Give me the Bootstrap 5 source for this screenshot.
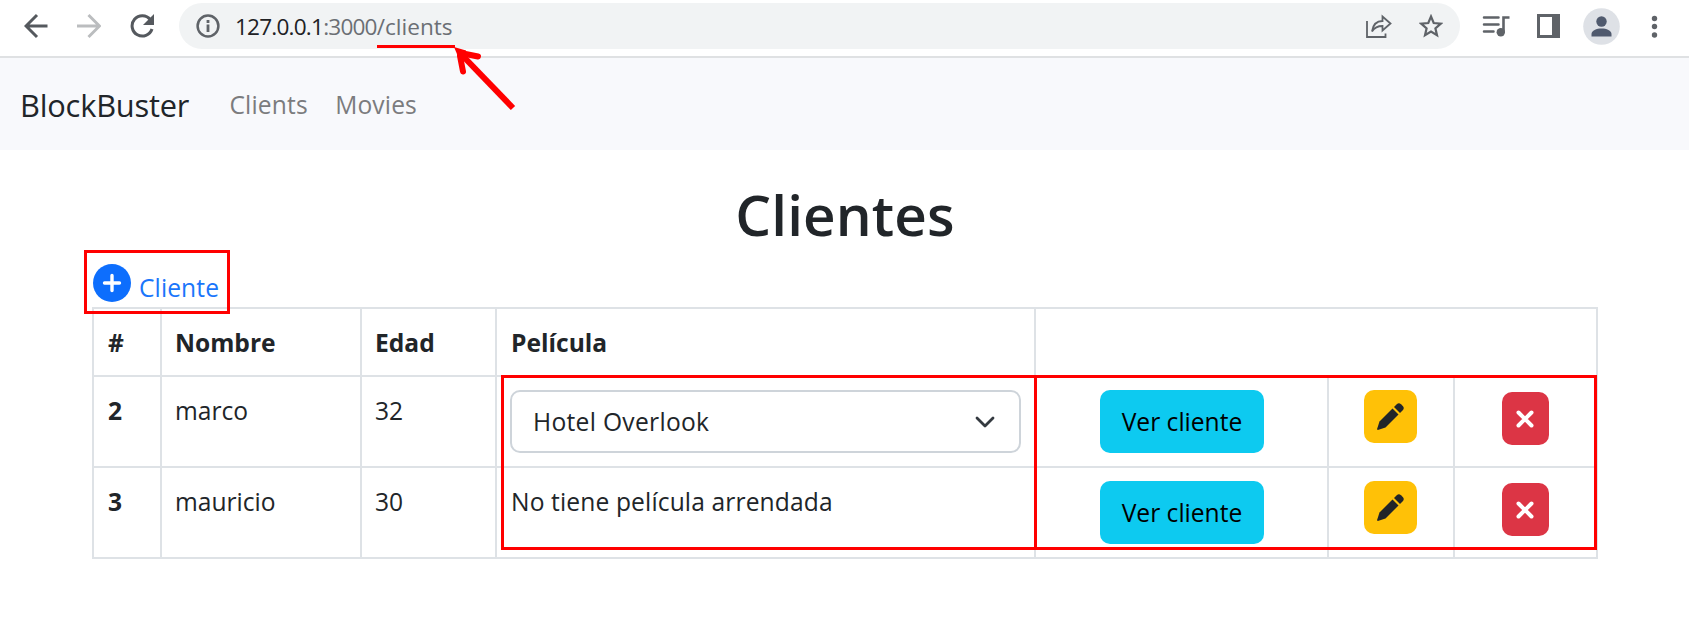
<!DOCTYPE html>
<html lang="es">
<head>
<meta charset="utf-8">
<meta name="viewport" content="width=device-width, initial-scale=1">
<title>Clientes</title>
<link href="https://cdn.jsdelivr.net/npm/bootstrap@5.3.0/dist/css/bootstrap.min.css" rel="stylesheet">
<style>
html { font-size: 26.4px; }
body { font-family: "Open Sans", "Noto Sans", sans-serif; font-size: 24.6px; line-height: 39.6px; color: #212529; background: #fff; overflow: hidden; }
svg { display: block; flex: none; }
.browser-bar { height: 58px; border-bottom: 2px solid #dfe1e3; padding: 3px 0 0 24px; position: relative; z-index: 3; }
.bar-group { height: 46px; }
.i-fwd { margin-left: 29px; }
.i-reload { margin-left: 29px; }
.i-star { margin-left: 27px; }
.i-music { margin-left: 22px; }
.i-panel { margin-left: 27px; }
.i-user { margin-left: 23px; }
.i-dots { margin-left: 31px; }
.url-pill { width: 1281px; height: 46px; margin-left: 24px; padding: 0 17px 0 17px; border-radius: 23px; background: #f1f3f4; }
.url-text { font-size: 22.6px; letter-spacing: -.8px; margin-left: 15px; color: #202124; line-height: 47px; }
.url-rest { color: #6b6f74; }
.url-path { position: relative; letter-spacing: 0; }
.url-mark { position: absolute; left: 0; top: 32px; }
.app-nav { height: 92px; background: #f8f9fc; padding: 0 0 0 20px; --bs-navbar-padding-y: 0; }
.app-nav .navbar-brand { font-size: 30.8px; letter-spacing: -.2px; line-height: 40px; padding: 0; margin: 2px 27px 0 0; color: #212529; }
.app-nav .nav-link { padding: 2px 13.2px 0; margin-right: 1px; letter-spacing: .15px; color: #7b7c7e; line-height: 40px; }
.page-body { width: 1506px; margin-left: 92px; }
.page-title { font-size: 56.6px; font-weight: 600; line-height: 76px; letter-spacing: .1px; padding-top: 27px; margin: 0; height: 100px; }
.add-box { position: relative; width: 146px; height: 64px; margin: 0 0 -7px -8px; padding: 0 0 0 6px; border: 3px solid #f00; z-index: 2; }
.add-box a { color: #1a76fb; text-decoration: none; padding-top: 7px; }
.add-icon { margin-top: 4px; }
.add-label { margin: 8px 0 0 8px; letter-spacing: .1px; }
.client-grid { width: 1504px; table-layout: fixed; margin: 0; border-collapse: collapse; }
.client-grid th, .client-grid td { padding: 14px 13px 11px; border: 2px solid #dee2e6; vertical-align: top; line-height: 39.6px; color: #212529; box-shadow: none; }
.client-grid th:first-child, .client-grid td:nth-child(4), .client-grid th:nth-child(4) { padding-left: 14px; }
.client-grid .ctl { padding-top: 12px; }
.head-row { height: 68px; }
.data-row { height: 91px; }
.film-select { width: 511px; height: 63px; margin: 1px 0 0 -1px; padding: 0 0 0 21px; font-size: 24.6px; letter-spacing: .3px; line-height: 59px; border: 2px solid #ced4da; border-radius: 10px; color: #212529; background-image: none; }
.film-select svg { margin-right: 24px; }
.film-none { letter-spacing: .13px; }
.act { border: 0; padding: 0; border-radius: 10px; font-size: 24.6px; display: flex; align-items: center; justify-content: center; }
.act-view { width: 164px; height: 63px; margin: 1px 0 0 51px; padding-top: 2px; background: #0dcaf0; color: #000; }
.act-edit { width: 53px; height: 53px; margin: 1px 0 0 22px; background: #ffc107; color: #212529; }
.act-del { width: 47px; height: 53px; margin: 3px 0 0 34px; padding-right: 1px; background: #dc3545; color: #fff; }
.grid-wrap { position: relative; }
.frame { position: absolute; border: 3px solid #f00; top: 68px; height: 175px; pointer-events: none; }
.frame-film { left: 409px; width: 536px; }
.frame-acts { left: 942px; width: 563px; }
</style>
</head>
<body>
<header class="browser-bar d-flex align-items-start">
  <div class="bar-group d-flex align-items-center">
    <svg width="24" height="26" viewBox="0 0 24 26" fill="none" stroke="#55595e" stroke-width="3"><path d="M23.500 13H2M13 2 2 13 13 24"/></svg>
    <svg class="i-fwd" width="24" height="26" viewBox="0 0 24 26" fill="none" stroke="#bbbdbf" stroke-width="3"><path d="M0 13H22M11.500 2 22.500 13 11.500 24"/></svg>
    <svg class="i-reload" width="25" height="26" viewBox="0 0 25 26"><path d="M20.300 6.500A10.200 10.200 0 1 0 22 16" fill="none" stroke="#55595e" stroke-width="3"/><path d="M24 1v11H13z" fill="#55595e"/></svg>
  </div>
  <div class="url-pill d-flex align-items-center">
    <svg width="24" height="24" viewBox="0 0 24 24"><circle cx="12" cy="12" r="10.400" fill="none" stroke="#5f6368" stroke-width="2.500"/><path d="M12 6v3M12 10.500V18" stroke="#5f6368" stroke-width="2.800"/></svg>
    <div class="url-text me-auto text-nowrap"><span>127.0.0.1</span><span class="url-rest">:3000</span><span class="url-rest url-path">/clients
      <svg class="url-mark" width="144" height="72" viewBox="0 0 144 72" fill="none" stroke="#f00"><path d="M0 3.500H78" stroke-width="3"/><path d="M136 65 82 9" stroke-width="6"/><path d="M101 13.500 86 10.500M86 28.500 83 13" stroke-width="6" stroke-linecap="round"/><path d="M77 4 89 7.500V17H82.500Z" fill="#f00" stroke="none"/></svg></span></div>
    <svg width="26" height="26" viewBox="0 0 26 26" fill="none" stroke="#5f6368" stroke-width="1.800"><path d="M1 8V24H19.500V20.500"/><path d="M6 18.500C7 11.500 11 8 16.500 8V3.500L24.500 10.500 16.500 17.500V13C12 13 8.500 14.500 6 18.500Z"/></svg>
    <svg class="i-star" width="24" height="24" viewBox="0 0 24 24" fill="none" stroke="#5f6368" stroke-width="2.200"><path d="M12 2.500 14.700 9l7.100.6-5.400 4.700 1.600 7L12 17.600l-6 3.700 1.600-7L2.200 9.600 9.300 9Z"/></svg>
  </div>
  <div class="bar-group d-flex align-items-center">
    <svg class="i-music" width="28" height="24" viewBox="0 0 28 24"><path d="M2 3.500H16.500M2 10.500H16.500M2 17.500H11.500" stroke="#5f6368" stroke-width="2.500" stroke-linecap="round"/><path d="M21.500 18V3.500H27.500" fill="none" stroke="#5f6368" stroke-width="2.600"/><circle cx="18.800" cy="18.300" r="4.200" fill="#5f6368"/></svg>
    <svg class="i-panel" width="23" height="24" viewBox="0 0 23 24"><path d="M0 0H23V24H0ZM3 3V21H15V3Z" fill="#5f6368" fill-rule="evenodd"/></svg>
    <svg class="i-user" width="37" height="37" viewBox="0 0 37 37"><circle cx="18.500" cy="18.500" r="18.300" fill="#dee1e6"/><circle cx="18.500" cy="13.500" r="5.200" fill="#505a6e"/><path d="M8.500 28.500V26C8.500 18.500 28.500 18.500 28.500 26V28.500Z" fill="#505a6e"/></svg>
    <svg class="i-dots" width="7" height="24" viewBox="0 0 7 24" fill="#5f6368"><circle cx="3.500" cy="4.500" r="2.700"/><circle cx="3.500" cy="12.500" r="2.700"/><circle cx="3.500" cy="21" r="2.700"/></svg>
  </div>
</header>
<nav class="navbar navbar-expand app-nav">
  <a class="navbar-brand" href="#">BlockBuster</a>
  <div class="navbar-nav"><a class="nav-link" href="#">Clients</a><a class="nav-link" href="#">Movies</a></div>
</nav>
<main class="page-body">
  <h1 class="page-title text-center">Clientes</h1>
  <div class="add-box"><a class="d-flex align-items-start" href="#">
    <svg class="add-icon" width="38" height="38" viewBox="0 0 38 38"><circle cx="19" cy="19" r="19" fill="#0d6efd"/><path d="M19 11.500V26.500M11.500 19H26.500" stroke="#fff" stroke-width="3.400" stroke-linecap="round"/></svg>
    <span class="add-label">Cliente</span></a></div>
  <div class="grid-wrap">
    <table class="table client-grid">
      <colgroup><col style="width:68px"><col style="width:200px"><col style="width:135px"><col style="width:539px"><col style="width:293px"><col style="width:126px"><col style="width:143px"></colgroup>
      <thead><tr class="head-row"><th>#</th><th>Nombre</th><th>Edad</th><th>Película</th><th colspan="3"></th></tr></thead>
      <tbody>
        <tr class="data-row"><th>2</th><td>marco</td><td>32</td>
          <td class="ctl"><div class="film-select form-select d-flex align-items-center"><span>Hotel Overlook</span><svg class="ms-auto" width="20" height="12" viewBox="0 0 20 12" fill="none" stroke="#343a40" stroke-width="2.800" stroke-linecap="round" stroke-linejoin="round"><path d="M2 2 10 10 18 2"/></svg></div></td>
          <td class="ctl"><button class="btn act act-view">Ver cliente</button></td>
          <td class="ctl"><button class="btn act act-edit"><svg width="27" height="27" viewBox="0 0 27 27" fill="currentColor"><path d="M15.500 5.500 21.500 11.500 8.500 24.500 .8 27 0 26.200 2.500 18.500Z"/><path d="M17 4 20 1Q22 -.5 24 1.200L26 3.200Q27.500 5 26 7L23 10Z"/></svg></button></td>
          <td class="ctl"><button class="btn act act-del"><svg width="20" height="20" viewBox="0 0 20 20" stroke="#fff" stroke-width="4" stroke-linecap="round"><path d="M3.500 3.500 16.500 16.500M16.500 3.500 3.500 16.500"/></svg></button></td></tr>
        <tr class="data-row"><th>3</th><td>mauricio</td><td>30</td>
          <td><span class="film-none">No tiene película arrendada</span></td>
          <td class="ctl"><button class="btn act act-view">Ver cliente</button></td>
          <td class="ctl"><button class="btn act act-edit"><svg width="27" height="27" viewBox="0 0 27 27" fill="currentColor"><path d="M15.500 5.500 21.500 11.500 8.500 24.500 .8 27 0 26.200 2.500 18.500Z"/><path d="M17 4 20 1Q22 -.5 24 1.200L26 3.200Q27.500 5 26 7L23 10Z"/></svg></button></td>
          <td class="ctl"><button class="btn act act-del"><svg width="20" height="20" viewBox="0 0 20 20" stroke="#fff" stroke-width="4" stroke-linecap="round"><path d="M3.500 3.500 16.500 16.500M16.500 3.500 3.500 16.500"/></svg></button></td></tr>
      </tbody>
    </table>
    <div class="frame frame-film"></div>
    <div class="frame frame-acts"></div>
  </div>
</main>
<script src="https://cdn.jsdelivr.net/npm/bootstrap@5.3.0/dist/js/bootstrap.bundle.min.js"></script>
</body>
</html>
